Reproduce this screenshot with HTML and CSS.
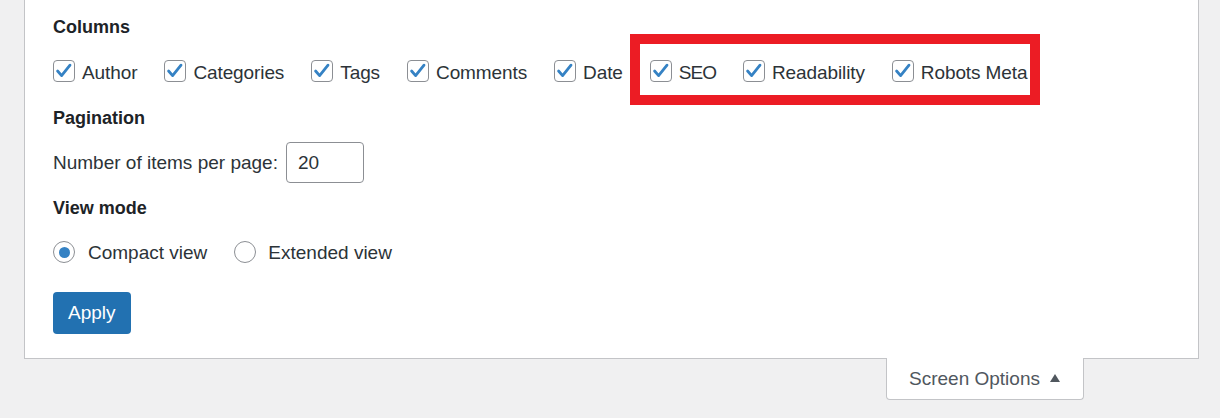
FILE: index.html
```html
<!DOCTYPE html>
<html lang="en">
<head>
<meta charset="utf-8">
<title>Screen Options</title>
<link rel="stylesheet" href="styles.css">
</head>
<body>
<div class="page">
  <div class="panel">
    <div class="legend">Columns</div>
    <div class="cols">
      <label class="opt"><span class="cb"><svg viewBox="0 0 22 22" width="22" height="22"><path d="M4.6 11 L8.6 15.6 L17 5.2" fill="none" stroke="#3582c4" stroke-width="2.8" stroke-linecap="round" stroke-linejoin="round"/></svg></span>Author</label>
      <label class="opt"><span class="cb"><svg viewBox="0 0 22 22" width="22" height="22"><path d="M4.6 11 L8.6 15.6 L17 5.2" fill="none" stroke="#3582c4" stroke-width="2.8" stroke-linecap="round" stroke-linejoin="round"/></svg></span>Categories</label>
      <label class="opt"><span class="cb"><svg viewBox="0 0 22 22" width="22" height="22"><path d="M4.6 11 L8.6 15.6 L17 5.2" fill="none" stroke="#3582c4" stroke-width="2.8" stroke-linecap="round" stroke-linejoin="round"/></svg></span>Tags</label>
      <label class="opt"><span class="cb"><svg viewBox="0 0 22 22" width="22" height="22"><path d="M4.6 11 L8.6 15.6 L17 5.2" fill="none" stroke="#3582c4" stroke-width="2.8" stroke-linecap="round" stroke-linejoin="round"/></svg></span>Comments</label>
      <label class="opt"><span class="cb"><svg viewBox="0 0 22 22" width="22" height="22"><path d="M4.6 11 L8.6 15.6 L17 5.2" fill="none" stroke="#3582c4" stroke-width="2.8" stroke-linecap="round" stroke-linejoin="round"/></svg></span>Date</label>
      <label class="opt opt-seo"><span class="cb"><svg viewBox="0 0 22 22" width="22" height="22"><path d="M4.6 11 L8.6 15.6 L17 5.2" fill="none" stroke="#3582c4" stroke-width="2.8" stroke-linecap="round" stroke-linejoin="round"/></svg></span>SEO</label>
      <label class="opt"><span class="cb"><svg viewBox="0 0 22 22" width="22" height="22"><path d="M4.6 11 L8.6 15.6 L17 5.2" fill="none" stroke="#3582c4" stroke-width="2.8" stroke-linecap="round" stroke-linejoin="round"/></svg></span>Readability</label>
      <label class="opt"><span class="cb"><svg viewBox="0 0 22 22" width="22" height="22"><path d="M4.6 11 L8.6 15.6 L17 5.2" fill="none" stroke="#3582c4" stroke-width="2.8" stroke-linecap="round" stroke-linejoin="round"/></svg></span>Robots Meta</label>
    </div>

    <div class="legend legend-pag">Pagination</div>
    <div class="pag">
      <span class="pag-label">Number of items per page:</span>
      <span class="num">20</span>
    </div>

    <div class="legend legend-view">View mode</div>
    <div class="radios">
      <label class="ropt"><span class="rb rb-on"><span class="dot"></span></span>Compact view</label>
      <label class="ropt ropt-ext"><span class="rb"></span>Extended view</label>
    </div>

    <div class="actions"><span class="btn">Apply</span></div>
  </div>

  <div class="tabrow">
    <div class="tab">Screen Options<span class="arrow"></span></div>
  </div>

  <div class="highlight"></div>
</div>
</body>
</html>
```

FILE: styles.css
```css
html, body {
  margin: 0;
  padding: 0;
}
body {
  background: #f0f0f1;
  font-family: "Liberation Sans", Arial, sans-serif;
  color: #2c3338;
  width: 1220px;
  height: 418px;
  overflow: hidden;
}
.page {
  position: relative;
  padding: 0 21px 0 24px;
}
.panel {
  background: #fff;
  border: 1px solid #c3c4c7;
  border-top: none;
  padding: 15px 20px 24px 28px;
}
.legend {
  font-size: 18px;
  font-weight: 700;
  color: #1d2327;
  line-height: 24px;
  height: 24px;
}
.legend-pag { margin-top: 17px; }
.legend-view { margin-top: 13px; }

.cols {
  margin-top: 18px;
  height: 32px;
  display: flex;
  align-items: center;
  gap: 27px;
}
.opt {
  display: flex;
  align-items: center;
  gap: 7px;
  font-size: 19px;
  line-height: 24px;
  color: #2c3338;
  letter-spacing: -0.1px;
}
.opt-seo { letter-spacing: -1px; }
.cb {
  width: 20px;
  height: 20px;
  border: 1px solid #8c8f94;
  border-radius: 4px;
  position: relative;
  flex: none;
  margin-top: -4px;
}
.cb svg {
  position: absolute;
  left: -1px;
  top: -1px;
}

.pag {
  margin-top: 12px;
  display: flex;
  align-items: center;
  gap: 8px;
  height: 41px;
  font-size: 19px;
}
.num {
  box-sizing: border-box;
  width: 78px;
  height: 41px;
  border: 1px solid #8c8f94;
  border-radius: 4px;
  padding-left: 11px;
  display: flex;
  align-items: center;
  color: #2c3338;
}

.radios {
  margin-top: 17px;
  height: 32px;
  display: flex;
  align-items: center;
  gap: 27px;
}
.ropt {
  display: flex;
  align-items: center;
  gap: 13px;
  font-size: 19px;
  line-height: 24px;
}
.ropt-ext { gap: 12px; }
.rb {
  box-sizing: border-box;
  width: 22px;
  height: 22px;
  border: 1px solid #8c8f94;
  border-radius: 50%;
  display: flex;
  align-items: center;
  justify-content: center;
  flex: none;
  margin-top: -2px;
}
.dot {
  width: 11px;
  height: 11px;
  border-radius: 50%;
  background: #3582c4;
}

.actions {
  margin-top: 23px;
  display: flex;
}
.btn {
  box-sizing: border-box;
  height: 42px;
  padding: 0 15px;
  background: #2271b1;
  border-radius: 4px;
  color: #fff;
  font-size: 19px;
  display: flex;
  align-items: center;
}

.tabrow {
  display: flex;
  justify-content: flex-end;
  padding-right: 115px;
}
.tab {
  margin-top: -1px;
  box-sizing: border-box;
  height: 42px;
  width: 198px;
  background: #fff;
  border: 1px solid #c3c4c7;
  border-top: none;
  border-radius: 0 0 4px 4px;
  padding-left: 22px;
  display: flex;
  align-items: center;
  font-size: 19px;
  color: #50575e;
}
.arrow {
  width: 0;
  height: 0;
  border-left: 5.5px solid transparent;
  border-right: 5.5px solid transparent;
  border-bottom: 8px solid #50575e;
  margin-left: 10px;
  margin-top: -2px;
}

.highlight {
  position: absolute;
  left: 630px;
  top: 34px;
  width: 390px;
  height: 51px;
  border: 10px solid #ec1c24;
}
```
